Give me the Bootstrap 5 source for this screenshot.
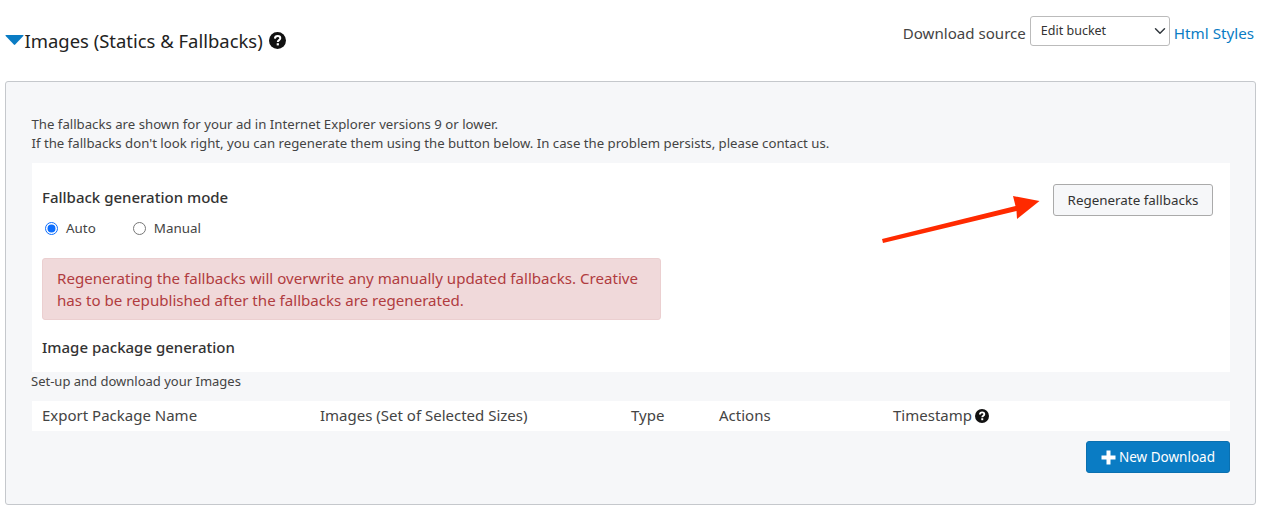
<!DOCTYPE html>
<html lang="en">
<head>
<meta charset="utf-8">
<title>Images</title>
<link href="https://cdn.jsdelivr.net/npm/bootstrap@5.3.0/dist/css/bootstrap.min.css" rel="stylesheet">
<style>
body{font-family:"Noto Sans","Open Sans",sans-serif;color:#333;background:#fff;font-size:14px;position:relative;min-height:515px;overflow:hidden}
.top-bar{height:81px;padding:16px 14px 0 5px}
.caret-ico{width:19px;height:10px;margin-top:19px;flex:none}
.sec-title{font-size:18.450px;line-height:24px;margin:13px 0 0 .5px;font-weight:400;color:#222}
.help-lg{width:17px;height:17px;margin:16px 0 0 6px;flex:none}
.help-sm{width:14px;height:14px;margin-left:3px;vertical-align:-2px}
.src-label{font-size:15.100px;line-height:24px;margin:5px 4px 0 0;color:#444}
.src-select{width:140px;height:30px;font-size:12.500px;padding:1px 24px 0 10px;border-color:#bbb;background-position:right 1px center;color:#333;border-radius:3px}
.src-link{font-size:15.200px;line-height:24px;margin:5px 0 0 4px;color:#0a7cc4;text-decoration:none}
.panel-box{margin:0 12px 0 5px;height:424px;background:#f6f7f9;border:1px solid #c5c8cc;border-radius:3px;padding:33px 25px 0 25.500px}
.intro-text{font-size:13.200px;line-height:19px;margin:0 0 10px;color:#444}
.white-sec{background:#fff;height:209px;padding:23px 17px 0 10.500px}
.sub-title{font-size:15px;line-height:22px;margin:0;font-weight:500;color:#333}
.mode-row{margin-top:11px;font-size:13.400px;line-height:18px;color:#444;padding-left:3px;gap:37px}
.mode-row .form-check-input{width:13px;height:13px;margin:0 8px 0 0;border-color:#777;flex:none}
.mode-row .form-check-input:checked{background-color:#fff;border-color:#0d6efd;background-image:url("data:image/svg+xml,%3csvg xmlns='http://www.w3.org/2000/svg' viewBox='-4 -4 8 8'%3e%3ccircle r='2.900' fill='%230d6efd'/%3e%3c/svg%3e")}
.warn-box{width:619px;height:62px;margin:21px 0 16px;padding:8px 14px;background:#f0d9da;border:1px solid #ebcfd0;border-radius:3px;color:#b03c40;font-size:15.100px;line-height:22px}
.regen-btn{width:160px;height:32px;padding:0;font-size:13.400px;color:#333;background:#f6f7f9;border:1px solid #aaa;border-radius:3px;margin-top:-2px}
.setup-text{font-size:13px;line-height:18px;margin:0 0 0 -.5px;color:#444}
.head-table{margin:11px 0 10px;width:100%;table-layout:fixed;background:#fff}
.head-table th{font-weight:400;font-size:15px;line-height:28px;height:30px;padding:0 0 2px 10.500px;color:#444;border:0;background:#fff}
.new-btn{width:144px;height:32px;padding:0;font-size:13.500px;background:#0a7cc4;border:1px solid #0a70b0;border-radius:3px;color:#fff;gap:3px}
.plus-ico{width:15px;height:15px}
.red-arrow{position:absolute;left:880px;top:190px;width:165px;height:56px;pointer-events:none}
</style>
</head>
<body>
<div class="top-bar d-flex justify-content-between">
  <div class="d-flex align-items-start">
    <svg class="caret-ico" viewBox="0 0 19 10"><path d="M1 0H18Q19 0 18.300 1L10.200 9.600Q9.500 10.200 8.800 9.600L.7 1Q0 0 1 0Z" fill="#0a7cc4"/></svg>
    <h2 class="sec-title">Images (Statics &amp; Fallbacks)</h2>
    <svg class="help-lg" viewBox="0 0 17 17"><circle cx="8.500" cy="8.500" r="8.500" fill="#111"/><path d="M5.900 6.600C6 4.900 7.200 4.100 8.700 4.100C10.200 4.100 11.300 5 11.300 6.300C11.300 8.100 8.800 8.100 8.800 10" fill="none" stroke="#fff" stroke-width="2"/><rect x="7.700" y="11.200" width="2.200" height="2.200" fill="#fff"/></svg>
  </div>
  <div class="d-flex align-items-start">
    <span class="src-label">Download source</span>
    <select class="form-select src-select" aria-label="Download source"><option>Edit bucket</option></select>
    <a class="src-link" href="#">Html Styles</a>
  </div>
</div>
<div class="panel-box">
  <p class="intro-text">The fallbacks are shown for your ad in Internet Explorer versions 9 or lower.<br>If the fallbacks don't look right, you can regenerate them using the button below. In case the problem persists, please contact us.</p>
  <div class="white-sec">
    <div class="d-flex justify-content-between align-items-start">
      <div>
        <h3 class="sub-title">Fallback generation mode</h3>
        <div class="mode-row d-flex">
          <label class="d-flex align-items-center"><input class="form-check-input" type="radio" name="mode" checked>Auto</label>
          <label class="d-flex align-items-center"><input class="form-check-input" type="radio" name="mode">Manual</label>
        </div>
      </div>
      <button class="btn regen-btn" type="button">Regenerate fallbacks</button>
    </div>
    <div class="warn-box">Regenerating the fallbacks will overwrite any manually updated fallbacks. Creative has to be republished after the fallbacks are regenerated.</div>
    <h3 class="sub-title">Image package generation</h3>
  </div>
  <p class="setup-text">Set-up and download your Images</p>
  <table class="table head-table">
    <colgroup><col style="width:278px"><col style="width:311px"><col style="width:88px"><col style="width:174px"><col></colgroup>
    <thead><tr><th>Export Package Name</th><th>Images (Set of Selected Sizes)</th><th>Type</th><th>Actions</th><th>Timestamp<svg class="help-sm" viewBox="0 0 17 17"><circle cx="8.500" cy="8.500" r="8.500" fill="#111"/><path d="M5.900 6.600C6 4.900 7.200 4.100 8.700 4.100C10.200 4.100 11.300 5 11.300 6.300C11.300 8.100 8.800 8.100 8.800 10" fill="none" stroke="#fff" stroke-width="2.200"/><rect x="7.600" y="11.200" width="2.400" height="2.400" fill="#fff"/></svg></th></tr></thead>
  </table>
  <div class="d-flex justify-content-end">
    <button class="btn new-btn d-flex align-items-center justify-content-center" type="button"><svg class="plus-ico" viewBox="0 0 15 15"><path d="M5.500 0.500H9.500V5.500H14.500V9.500H9.500V14.500H5.500V9.500H.5V5.500H5.500Z" fill="#fff"/></svg>New Download</button>
  </div>
</div>
<svg class="red-arrow" viewBox="880 190 165 56"><path d="M882 239L1015.500 206L1013 196L1039.500 201L1017 219L1016.500 211L883 243Z" fill="#ff2a00"/></svg>
</body>
</html>
